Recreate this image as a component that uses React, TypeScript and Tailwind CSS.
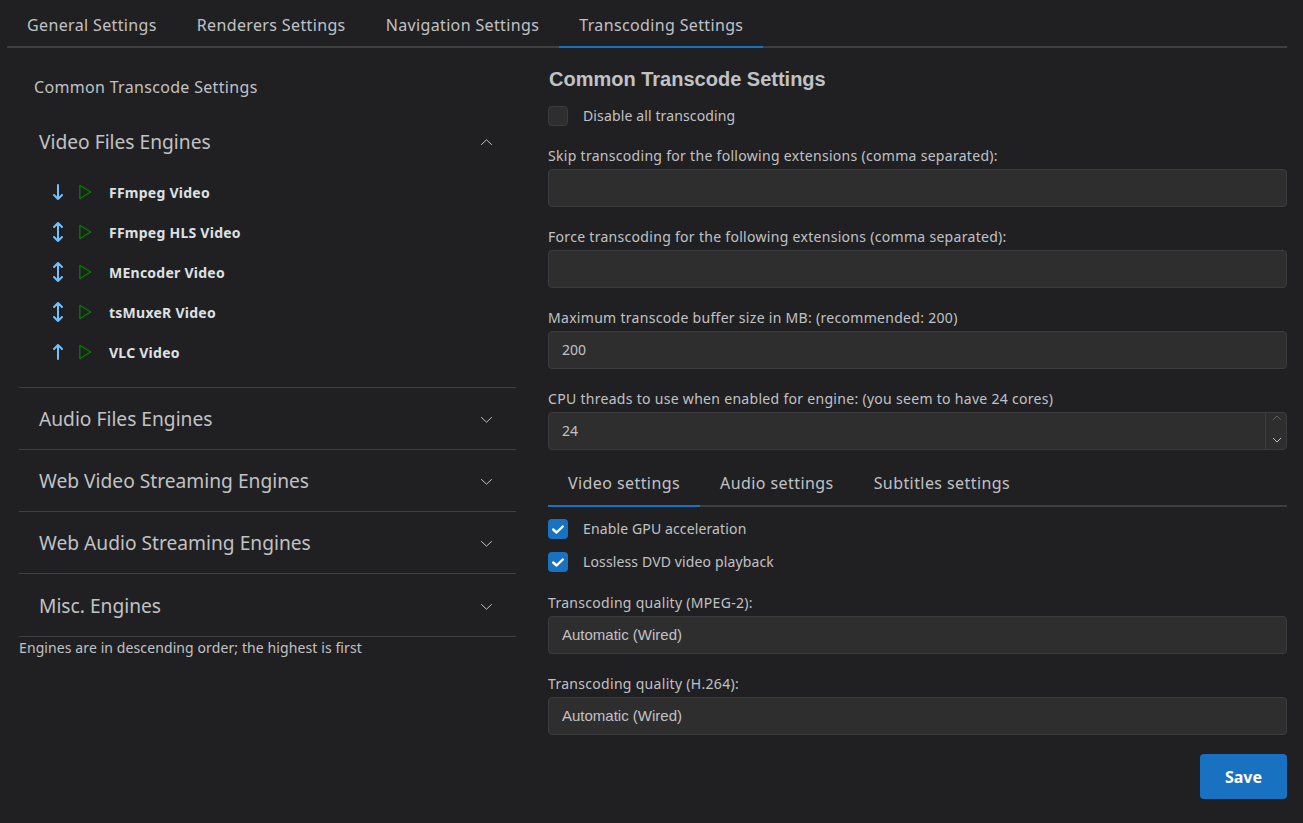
import type { ReactNode } from 'react';

// tabler-style icon paths used in the engine list
function Icon({ d, className }: { d: string; className?: string }) {
  return (
    <svg viewBox="0 0 24 24" fill="none" stroke="currentColor" strokeWidth="2" strokeLinecap="round" strokeLinejoin="round" className={className}>
      <path d={d} />
    </svg>
  );
}

const ARROW_DOWN = 'M12 5v14M16 15l-4 4M8 15l4 4';
const ARROW_UP = 'M12 5v14M16 9l-4-4M8 9l4-4';
const ARROWS_BOTH = 'M8 7l4-4l4 4M8 17l4 4l4-4M12 3v18';
const PLAY = 'M7 4v16l13-8z';

function Chevron({ up }: { up?: boolean }) {
  return (
    <svg viewBox="0 0 15 15" fill="none" className={`h-[15px] w-[15px] text-[#c1c2c5] ${up ? 'rotate-180' : ''}`}>
      <path d="M2.2 5.2 7.5 10.2 12.8 5.2" stroke="currentColor" strokeWidth="1" />
    </svg>
  );
}

function Engine({ name, arrow }: { name: string; arrow: string }) {
  return (
    <div className="flex h-10 items-center">
      <Icon d={arrow} className="ml-[27px] h-6 w-6 text-[#74c0fc]" />
      <Icon d={PLAY} className="ml-[4px] h-5 w-5 text-[#008000] [stroke-width:1.5]" />
      <span className="ml-[15px] text-[14px] font-bold tracking-[0.25px] text-[#dee0e3]">{name}</span>
    </div>
  );
}

function AccordionRow({ label, tall }: { label: string; tall?: boolean }) {
  return (
    <div className={`flex items-center justify-between border-b border-[#3f3f41] pl-5 pr-[22px] pt-[2px] ${tall ? 'h-[63px]' : 'h-[62px]'}`}>
      <span className="text-[19.2px] text-[#c1c2c5]">{label}</span>
      <Chevron />
    </div>
  );
}

function Field({ label, children }: { label: string; children: ReactNode }) {
  return (
    <div className="mt-5">
      <div className="mb-[2px] h-[21px] text-[14px] leading-[19px] tracking-[0.3px] text-[#c1c2c5]">{label}</div>
      {children}
    </div>
  );
}

function Input({ value = '', sans }: { value?: string; sans?: boolean }) {
  return (
    <input
      readOnly
      value={value}
      className={`block h-[38px] w-full rounded-[4px] border border-[#3c3c3e] bg-[#2e2e2f] px-[13px] pb-[2px] text-[#c1c2c5] outline-none ${sans ? "font-['Liberation_Sans',sans-serif] text-[15px]" : 'text-[14px]'}`}
    />
  );
}

function Check({ label, checked }: { label: string; checked?: boolean }) {
  return (
    <div className="flex h-5 items-center">
      {checked ? (
        <span className="flex h-5 w-5 items-center justify-center rounded-[4px] bg-[#1971c2]">
          <svg viewBox="0 0 10 7" fill="none" className="h-[9px] w-[12px] text-white">
            <path d="M1 3.5 3.8 6 9 1" stroke="currentColor" strokeWidth="2" strokeLinecap="round" strokeLinejoin="round" />
          </svg>
        </span>
      ) : (
        <span className="h-5 w-5 rounded-[4px] border border-[#3c3c3e] bg-[#2e2e2f]" />
      )}
      <span className="ml-[15px] pb-[2px] text-[14px] tracking-[0.13px] text-[#c1c2c5]">{label}</span>
    </div>
  );
}

export default function App() {
  const mainTabs = ['General Settings', 'Renderers Settings', 'Navigation Settings', 'Transcoding Settings'];
  const subTabs = ['Video settings', 'Audio settings', 'Subtitles settings'];

  return (
    <div className="min-h-[823px] bg-[#202022] pl-[7px] pr-4 font-['Noto_Sans',sans-serif] text-[#c1c2c5]">
      <div className="flex h-[48px] border-b-2 border-[#3f3f41]">
        {mainTabs.map((t, i) => (
          <div key={t} className={`-mb-[2px] flex h-[48px] items-center border-b-2 px-5 pt-[3px] text-[16px] tracking-[0.36px] ${i === 3 ? 'border-[#1971c2]' : 'border-transparent'}`}>
            {t}
          </div>
        ))}
      </div>

      <div className="flex">
        <div className="ml-3 w-[497px]">
          <div className="mt-[19px] flex h-[40px] items-center pl-[15px] text-[16px] tracking-[0.32px]">Common Transcode Settings</div>
          <div className="border-b border-[#3f3f41] pb-[15px]">
            <div className="mt-[11px] flex h-[49px] items-center justify-between pl-5 pr-[22px]">
              <span className="text-[19.2px]">Video Files Engines</span>
              <Chevron up />
            </div>
            <div className="mt-[5px]">
              <Engine name="FFmpeg Video" arrow={ARROW_DOWN} />
              <Engine name="FFmpeg HLS Video" arrow={ARROWS_BOTH} />
              <Engine name="MEncoder Video" arrow={ARROWS_BOTH} />
              <Engine name="tsMuxeR Video" arrow={ARROWS_BOTH} />
              <Engine name="VLC Video" arrow={ARROW_UP} />
            </div>
          </div>
          <AccordionRow label="Audio Files Engines" />
          <AccordionRow label="Web Video Streaming Engines" />
          <AccordionRow label="Web Audio Streaming Engines" />
          <AccordionRow label="Misc. Engines" tall />
          <div className="text-[14px] leading-[21px] tracking-[0.1px]">Engines are in descending order; the highest is first</div>
        </div>

        <div className="ml-8 flex-1">
          <h3 className="mt-3 h-[38px] pl-[1px] font-['Liberation_Sans',sans-serif] text-[20px] font-bold leading-[39px] text-[#c1c2c5]">Common Transcode Settings</h3>
          <div className="mt-2">
            <Check label="Disable all transcoding" />
          </div>
          <Field label="Skip transcoding for the following extensions (comma separated):">
            <Input />
          </Field>
          <Field label="Force transcoding for the following extensions (comma separated):">
            <Input />
          </Field>
          <Field label="Maximum transcode buffer size in MB: (recommended: 200)">
            <Input value="200" />
          </Field>
          <Field label="CPU threads to use when enabled for engine: (you seem to have 24 cores)">
            <div className="relative">
              <Input value="24" />
              <div className="absolute inset-y-0 right-0 flex w-[22px] flex-col items-center justify-between border-l border-[#3c3c3e] py-[3px]">
                <svg viewBox="0 0 10 6" fill="none" className="h-[6px] w-[10px] text-[#5c5f66]">
                  <path d="M1 5 5 1 9 5" stroke="currentColor" />
                </svg>
                <svg viewBox="0 0 10 6" fill="none" className="mb-[4px] h-[6px] w-[10px] text-[#c1c2c5]">
                  <path d="M1 1 5 5 9 1" stroke="currentColor" />
                </svg>
              </div>
            </div>
          </Field>

          <div className="mt-[14px] flex h-[43px] border-b-2 border-[#3f3f41]">
            {subTabs.map((t, i) => (
              <div key={t} className={`-mb-[2px] flex h-[43px] items-center border-b-2 px-5 pb-[4px] text-[16px] tracking-[0.42px] ${i === 0 ? 'border-[#1971c2]' : 'border-transparent'}`}>
                {t}
              </div>
            ))}
          </div>
          <div className="mt-[12px] flex flex-col gap-[13px]">
            <Check label="Enable GPU acceleration" checked />
            <Check label="Lossless DVD video playback" checked />
          </div>
          <div className="pt-[1px]">
            <Field label="Transcoding quality (MPEG-2):">
              <Input value="Automatic (Wired)" sans />
            </Field>
            <Field label="Transcoding quality (H.264):">
              <Input value="Automatic (Wired)" sans />
            </Field>
          </div>
          <div className="mt-[19px] flex justify-end">
            <button className="h-[45px] w-[87px] rounded-[4px] bg-[#1971c2] text-[16px] font-bold text-white">Save</button>
          </div>
        </div>
      </div>
    </div>
  );
}
